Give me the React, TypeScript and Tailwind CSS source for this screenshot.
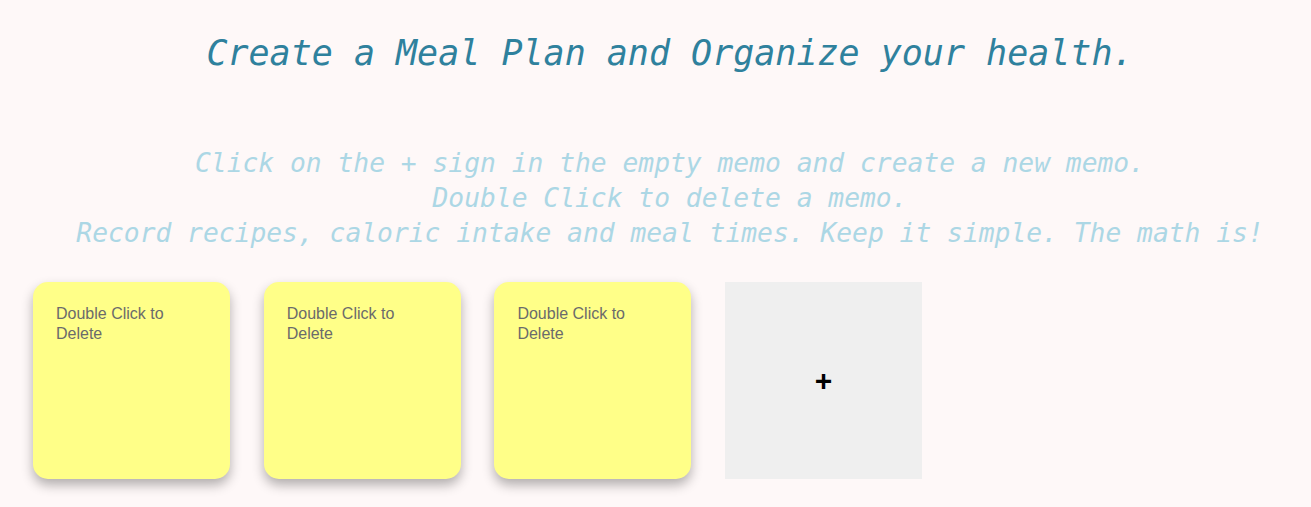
import React from "react"

const memos = ["Double Click to Delete", "Double Click to Delete", "Double Click to Delete"]

export default function App() {
  return (
    <main className="min-h-screen w-full bg-[#fef8f8] pb-[28px]">
      <h1 className="mt-0 pt-[33px] pl-[29px] text-center font-['DejaVu_Sans_Mono','Liberation_Mono',monospace] text-[35px] leading-[41px] italic font-normal text-[#2f819d]">
        Create a Meal Plan and Organize your health.
      </h1>

      <div className="mt-[72px] pl-[29px] text-center font-['DejaVu_Sans_Mono','Liberation_Mono',monospace] text-[26.3px] leading-[35px] italic text-[#acd7e5]">
        <p>Click on the + sign in the empty memo and create a new memo.</p>
        <p>Double Click to delete a memo.</p>
        <p>Record recipes, caloric intake and meal times. Keep it simple. The math is!</p>
      </div>

      <div className="mt-[31px] flex gap-[33.7px] pl-[33px] font-['Liberation_Sans',Arial,sans-serif]">
        {memos.map((text, i) => (
          <div
            key={i}
            className="h-[197px] w-[197px] rounded-[15px] bg-[#ffff88] px-[23px] pt-[22px] text-[16px] leading-[20px] text-[#6b6b6b] shadow-[0_6px_12px_rgba(0,0,0,0.3)]"
          >
            {text}
          </div>
        ))}
        <div className="flex h-[197px] w-[197px] items-center justify-center bg-[#efefef] text-[30px] font-bold text-black">
          +
        </div>
      </div>
    </main>
  )
}
